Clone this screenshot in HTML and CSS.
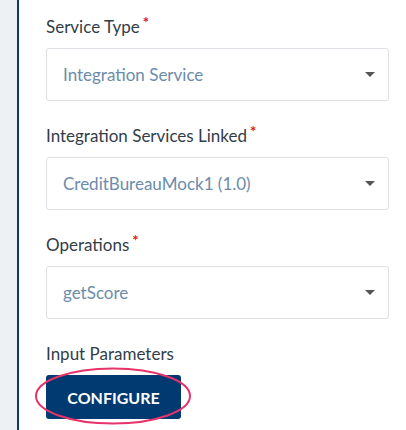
FILE: index.html
```html
<!DOCTYPE html>
<html>
<head>
<meta charset="utf-8">
<link rel="stylesheet" href="styles.css">
</head>
<body>
<div class="page">
  <div class="rail"></div>
  <div class="panel">
    <div class="field">
      <div class="label">Service Type<span class="req">*</span></div>
      <div class="select"><span class="value">Integration Service</span><span class="caret"></span></div>
    </div>
    <div class="field">
      <div class="label">Integration Services Linked<span class="req">*</span></div>
      <div class="select"><span class="value">CreditBureauMock1 (1.0)</span><span class="caret"></span></div>
    </div>
    <div class="field">
      <div class="label">Operations<span class="req">*</span></div>
      <div class="select"><span class="value">getScore</span><span class="caret"></span></div>
    </div>
    <div class="field last">
      <div class="label">Input Parameters</div>
      <div class="btn-wrap">
        <button class="btn">CONFIGURE</button>
        <svg class="ring" width="160" height="60" viewBox="0 0 160 60"><ellipse cx="80" cy="30" rx="77" ry="27.5" fill="none" stroke="#e8336a" stroke-width="2"/></svg>
      </div>
    </div>
  </div>
</div>
</body>
</html>
```
FILE: styles.css
```css
html, body { margin: 0; padding: 0; background: #fff; }
body { font-family: Lato, "Open Sans", sans-serif; }
.page { display: flex; height: 430px; overflow: hidden; }
.rail { width: 17px; background: #eef1f4; border-right: 2px solid #0b3b72; flex: none; }
.panel { flex: 1; padding: 16px 17px 0 27px; }
.field { margin-bottom: 24px; }
.label { font-size: 17px; line-height: 22px; height: 22px; color: #333d47; margin-bottom: 10px; }
.req { color: #e3141b; font-size: 15px; font-weight: 700; line-height: 0; vertical-align: 5px; margin-left: 3px; }
.select { height: 51px; border: 1px solid #dde0e4; border-radius: 3px; display: flex; align-items: center; justify-content: space-between; padding: 0 13px 0 16px; }
.value { font-size: 17px; color: #6b8cab; }
.caret { width: 0; height: 0; border-left: 5px solid transparent; border-right: 5px solid transparent; border-top: 5px solid #555; }
.btn-wrap { position: relative; display: inline-block; }
.btn { font-family: inherit; font-size: 16px; font-weight: 700; color: #fff; background: #003a70; border: none; border-radius: 3px; height: 44px; width: 135px; padding: 0; display: block; }
.ring { position: absolute; left: -13px; top: -9px; }
```
